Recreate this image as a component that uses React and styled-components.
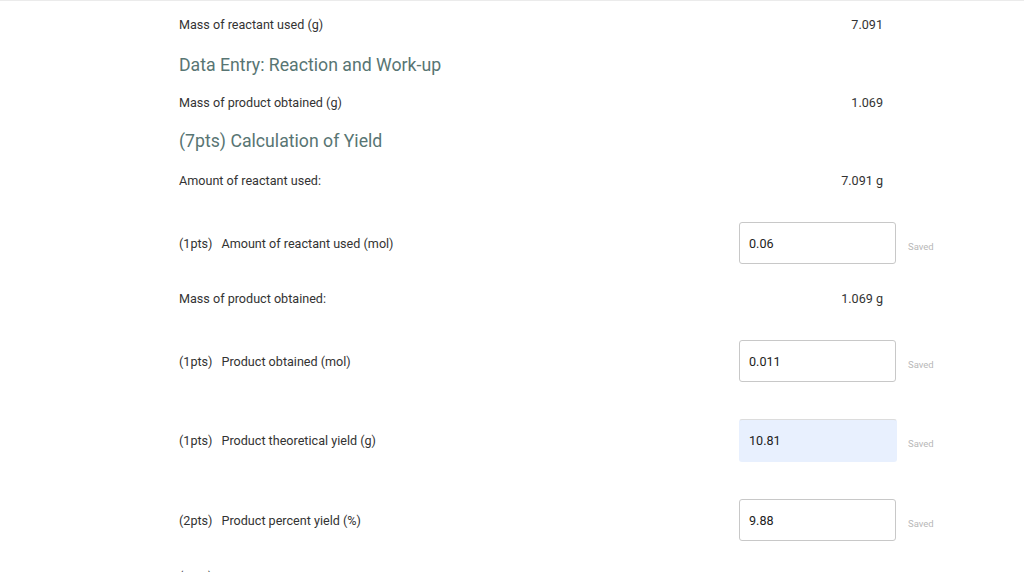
import styled, { createGlobalStyle } from "styled-components";

const GlobalStyle = createGlobalStyle`
  html, body {
    margin: 0;
    padding: 0;
    background: #ffffff;
    font-family: Roboto, "Liberation Sans", Arial, sans-serif;
    overflow: hidden;
  }
`;

const Page = styled.div`
  width: 1024px;
  height: 572px;
  border-top: 1px solid #ebebeb;
  box-sizing: border-box;
  overflow: hidden;
`;

const Sheet = styled.div`
  padding-left: 165px;
`;

const Row = styled.div`
  display: grid;
  grid-template-columns: 574px 158px auto;
  align-items: center;
  height: ${(p) => p.$h || 20}px;
  margin-top: ${(p) => p.$top}px;
`;

const Label = styled.div`
  display: flex;
  align-items: center;
  padding-left: 14px;
  font-size: 12.6px;
  color: #333333;
  white-space: nowrap;
`;

const Pts = styled.span`
  margin-right: 9px;
`;

const Heading = styled.h3`
  margin: 0;
  padding-left: 14px;
  font-size: 17.7px;
  font-weight: 400;
  color: #587573;
  white-space: nowrap;
`;

const Value = styled.div`
  text-align: right;
  padding-right: 14px;
  font-size: 12.6px;
  color: #333333;
`;

const Field = styled.div`
  box-sizing: border-box;
  width: ${(p) => (p.$filled ? 158 : 157)}px;
  height: ${(p) => (p.$filled ? 43 : 42)}px;
  display: flex;
  align-items: center;
  padding-left: 9px;
  font-size: 12.6px;
  color: #222222;
  background: ${(p) => (p.$filled ? "#e8f0fe" : "#ffffff")};
  border: 1px solid ${(p) => (p.$filled ? "transparent" : "#c8c8c8")};
  border-top-color: ${(p) => (p.$filled ? "#dcdcdc" : "#c8c8c8")};
  border-radius: 3px;
`;

const Status = styled.span`
  padding-left: 11px;
  padding-top: 6px;
  font-size: 9.5px;
  color: #b8b8b8;
`;

const InfoRow = ({ top, label, value }) => (
  <Row $top={top}>
    <Label>{label}</Label>
    <Value>{value}</Value>
  </Row>
);

const SectionRow = ({ top, children }) => (
  <Row $top={top} $h={24}>
    <Heading>{children}</Heading>
  </Row>
);

const AnswerRow = ({ top, pts, label, value, filled }) => (
  <Row $top={top} $h={42}>
    <Label>
      <Pts>({pts}pts)</Pts>
      {label}
    </Label>
    <Field $filled={filled}>{value}</Field>
    <Status>Saved</Status>
  </Row>
);

export default function App() {
  return (
    <>
      <GlobalStyle />
      <Page>
        <Sheet>
          <InfoRow top={13} label="Mass of reactant used (g)" value="7.091" />
          <SectionRow top={19}>Data Entry: Reaction and Work-up</SectionRow>
          <InfoRow top={15} label="Mass of product obtained (g)" value="1.069" />
          <SectionRow top={17}>(7pts) Calculation of Yield</SectionRow>
          <InfoRow top={17} label="Amount of reactant used:" value="7.091 g" />
          <AnswerRow top={32} pts={1} label="Amount of reactant used (mol)" value="0.06" />
          <InfoRow top={24} label="Mass of product obtained:" value="1.069 g" />
          <AnswerRow top={32} pts={1} label="Product obtained (mol)" value="0.011" />
          <AnswerRow top={37} pts={1} label="Product theoretical yield (g)" value="10.81" filled />
          <AnswerRow top={38} pts={2} label="Product percent yield (%)" value="9.88" />
          <Row $top={25}>
            <Label>
              <Pts>(3pts)</Pts>
            </Label>
          </Row>
        </Sheet>
      </Page>
    </>
  );
}
